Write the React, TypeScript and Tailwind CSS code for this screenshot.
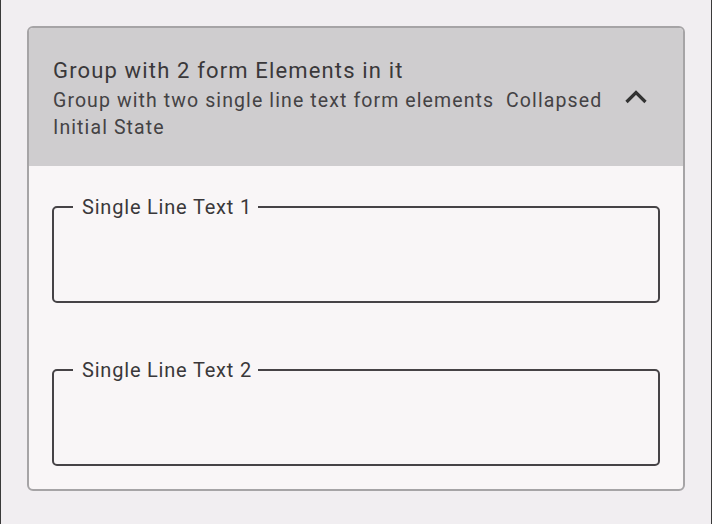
import React from "react";

const Field = ({ label }: { label: string }) => {
  return (
    <fieldset className="mx-[23px] rounded-[5px] border-2 border-[#464346]">
      <legend className="ml-[19px] pl-[9px] pr-[6px] text-[20px] leading-[24px] tracking-[0.8px] text-[#3a383a]">{label}</legend>
      <div className="h-[82px]"></div>
    </fieldset>
  );
};

const App = () => {
  return (
    <div
      className="w-[712px] h-[524px] bg-[#f1eef1] border-x border-[#3a3a3a] px-[26px] pt-[26px]"
      style={{ fontFamily: "Roboto, 'Noto Sans', sans-serif" }}
    >
      <div className="rounded-[6px] border-2 border-[#a6a4a6] bg-[#f9f6f7] overflow-hidden">
        <div className="flex items-start h-[138px] bg-[#cfcdcf] pl-[24px] pr-[35px] pt-[29px]">
          <div className="flex-1">
            <div className="text-[22px] leading-[28px] tracking-[1.15px] text-[#3a383a]">Group with 2 form Elements in it</div>
            <div className="mt-[2px] w-[560px] text-[19.5px] leading-[27px] tracking-[1.1px] text-[#444244]">
              Group with two single line text form elements&nbsp; Collapsed Initial State
            </div>
          </div>
          <div className="mt-[32px]">
            <svg width="24" height="16" viewBox="0 0 24 16">
              <polyline points="2.5,13 12,3.5 21.5,13" fill="none" stroke="#333" strokeWidth="3.2" />
            </svg>
          </div>
        </div>
        <div className="pt-[29px] pb-[23px] flex flex-col gap-[55px]">
          <Field label="Single Line Text 1" />
          <Field label="Single Line Text 2" />
        </div>
      </div>
    </div>
  );
};

export default App;
